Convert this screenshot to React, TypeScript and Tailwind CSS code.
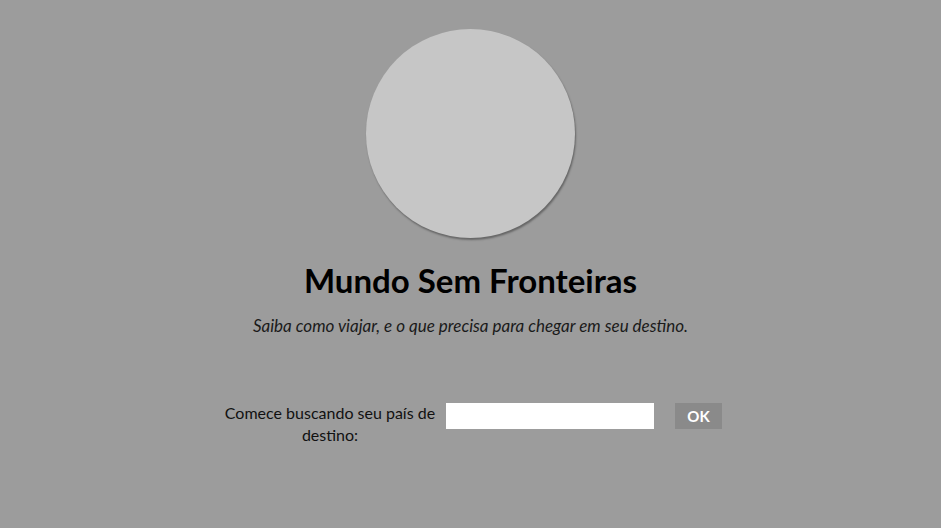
import React from 'react';

export default function App() {
  return (
    <div className="min-h-[528px] w-full bg-[#9c9c9c] flex flex-col items-center text-black" style={{ fontFamily: 'Lato, "Open Sans", sans-serif' }}>
      {/* logo placeholder */}
      <div className="mt-[29px] h-[209px] w-[209px] rounded-full bg-[#c6c6c6] shadow-[1px_2px_2px_rgba(0,0,0,0.35)]" />

      <h1 className="mt-[22px] text-[33px] font-bold leading-[40px]">Mundo Sem Fronteiras</h1>
      <p className="mt-[16px] text-[17px] italic leading-[20px] text-[#1a1a1a]">
        Saiba como viajar, e o que precisa para chegar em seu destino.
      </p>

      <div className="mt-[66px] flex items-start gap-[5px]">
        <label className="w-[222px] text-center text-[16px] leading-[22px] text-[#111]">
          Comece buscando seu país de destino:
        </label>
        <input type="text" className="mt-[1px] h-[26px] w-[208px] bg-white outline-none border-0" />
        <button className="ml-[16px] mt-[1px] h-[26px] w-[47px] bg-[#8a8a8a] text-[15px] font-bold text-white">
          OK
        </button>
      </div>
    </div>
  );
}
